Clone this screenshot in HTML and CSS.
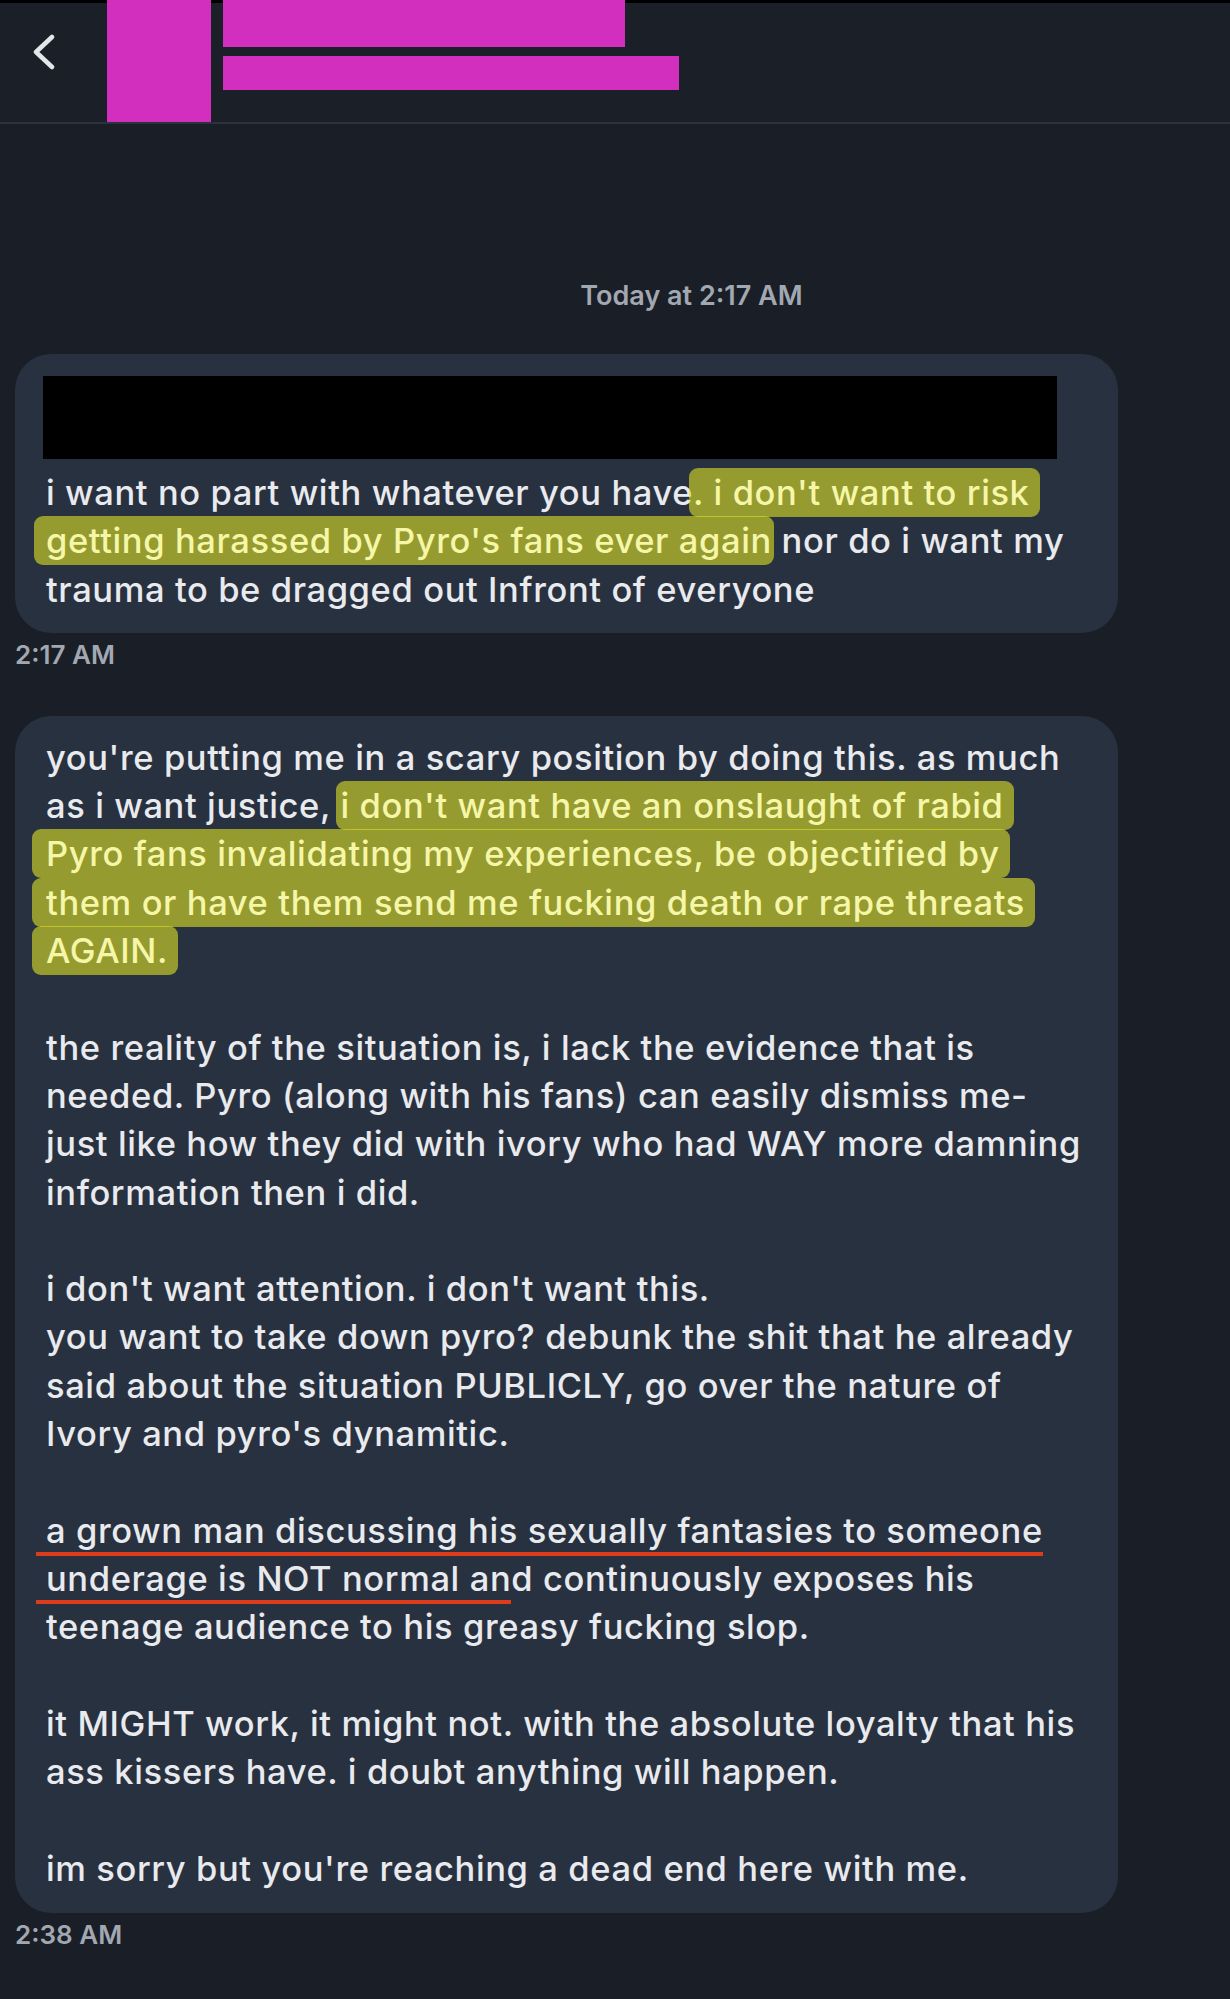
FILE: index.html
```html
<!DOCTYPE html>
<html>
<head>
<meta charset="utf-8">
<title>Chat</title>
<link rel="stylesheet" href="styles.css">
</head>
<body>
<div class="topbar">
  <svg class="back" width="24" height="36" viewBox="0 0 24 36"><polyline points="20,3 4,18 20,33" fill="none" stroke="#e4e6ea" stroke-width="4.5" stroke-linecap="round" stroke-linejoin="round"/></svg>
  <div class="avatar"></div>
  <div class="who">
    <div class="name-bar"></div>
    <div class="handle-bar"></div>
  </div>
</div>

<div class="chat">
  <div class="day">Today at 2:17 AM</div>

  <div class="bubble first">
    <div class="redacted"></div>
    <p>i want no part with whatever you have<span class="hl hl-a">. i don't want to risk</span><br><span class="hl hl-b">getting harassed by Pyro's fans ever again</span> nor do i want my<br>trauma to be dragged out Infront of everyone</p>
  </div>
  <div class="time">2:17 AM</div>

  <div class="bubble second">
    <p>you're putting me in a scary position by doing this. as much<br>as i want justice, <span class="hl">i don't want have an onslaught of rabid</span><br><span class="hl hl-l">Pyro fans invalidating my experiences, be objectified by</span><br><span class="hl hl-l">them or have them send me fucking death or rape threats</span><br><span class="hl hl-l">AGAIN.</span></p>
    <p>the reality of the situation is, i lack the evidence that is<br>needed. Pyro (along with his fans) can easily dismiss me-<br>just like how they did with ivory who had WAY more damning<br>information then i did.</p>
    <p>i don't want attention. i don't want this.<br>you want to take down pyro? debunk the shit that he already<br>said about the situation PUBLICLY, go over the nature of<br>Ivory and pyro's dynamitic.</p>
    <p><span class="red">a grown man discussing his sexually fantasies to someone</span><br><span class="red">underage is NOT normal an</span>d continuously exposes his<br>teenage audience to his greasy fucking slop.</p>
    <p>it MIGHT work, it might not. with the absolute loyalty that his<br>ass kissers have. i doubt anything will happen.</p>
    <p>im sorry but you're reaching a dead end here with me.</p>
  </div>
  <div class="time">2:38 AM</div>
</div>
</body>
</html>
```

FILE: styles.css
```css
/* chat screen */

body
{ margin: 0;
background-color: #1a1e26;
font-family: Inter, "Noto Sans", sans-serif;
color: #e8eaee;
}

div.topbar
{ display: flex;
align-items: flex-start;
height: 122px;
border-bottom: 2px solid #2c323c;
background: linear-gradient(#000 0, #000 3px, #1b1f27 3px);
}

svg.back
{ margin: 34px 0 0 32px;
}

div.avatar
{ width: 104px;
height: 122px;
margin-left: 51px;
background-color: #d22fbf;
}

div.who
{ margin-left: 12px;
}

div.name-bar
{ width: 402px;
height: 47px;
background-color: #d22fbf;
}

div.handle-bar
{ width: 456px;
height: 34px;
margin-top: 9px;
background-color: #d22fbf;
}

div.chat
{ padding: 0 112px 60px 15px;
}

div.day
{ padding-top: 156px;
padding-left: 250px;
text-align: center;
font-size: 27px;
line-height: 32px;
font-weight: 600;
color: #a2a8b2;
}

div.bubble
{ background-color: #283140;
border-radius: 36px;
font-size: 34.5px;
letter-spacing: 0.6px;
line-height: 48.3px;
font-weight: 500;
padding: 0 20px 0 31px;
}

div.bubble p
{ margin: 0;
white-space: nowrap;
}

div.bubble p + p
{ margin-top: 48.3px;
}

div.first
{ margin-top: 42px;
padding-top: 22px;
padding-bottom: 19px;
}

div.second
{ margin-top: 46px;
padding-top: 18px;
padding-bottom: 20px;
}

div.redacted
{ width: 1014px;
height: 83px;
margin-left: -3px;
margin-bottom: 10px;
background-color: #000;
}

div.time
{ margin-top: 7px;
font-size: 26px;
line-height: 30px;
font-weight: 600;
color: #a2a8b2;
}

span.hl
{ background-color: rgba(222, 226, 36, 0.6);
color: #f6f6a8;
border-radius: 9px;
padding: 4px 10px 4px 4px;
margin-right: -10px;
margin-left: -4px;
}

span.hl-l
{ padding-left: 14px;
margin-left: -14px;
}

span.hl-b
{ padding-left: 12px;
margin-left: -12px;
padding-right: 2px;
margin-right: -2px;
}

span.red
{ border-bottom: 4px solid #dc3c1c;
padding: 0 0 1px 10px;
margin-left: -10px;
}
```
